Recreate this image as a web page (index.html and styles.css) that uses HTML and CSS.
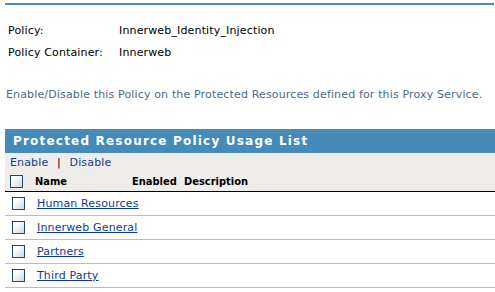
FILE: index.html
```html
<!DOCTYPE html>
<html lang="en">
<head>
  <meta charset="UTF-8">
  <title>Policy Usage</title>
  <link rel="stylesheet" href="styles.css">
</head>
<body>
  <div class="top-rule"></div>

  <table class="policy-info">
    <tr>
      <td class="label">Policy:</td>
      <td>Innerweb_Identity_Injection</td>
    </tr>
    <tr>
      <td class="label">Policy Container:</td>
      <td>Innerweb</td>
    </tr>
  </table>

  <p class="hint">Enable/Disable this Policy on the Protected Resources defined for this Proxy Service.</p>

  <div class="usage">
    <div class="usage-title">Protected Resource Policy Usage List</div>
    <div class="toolbar">
      <div class="actions">
        <a href="#">Enable</a>
        <span class="sep">|</span>
        <a href="#">Disable</a>
      </div>
      <div class="head-row">
        <span class="cb"></span>
        <span class="col-name">Name</span>
        <span class="col-enabled">Enabled</span>
        <span class="col-desc">Description</span>
      </div>
    </div>
    <ul class="rows">
      <li><span class="cb"></span><a href="#">Human Resources</a></li>
      <li><span class="cb"></span><a href="#">Innerweb General</a></li>
      <li><span class="cb"></span><a href="#">Partners</a></li>
      <li><span class="cb"></span><a href="#">Third Party</a></li>
    </ul>
  </div>
</body>
</html>
```
FILE: styles.css
```css
* {
  margin: 0;
  padding: 0;
  box-sizing: border-box;
}

body {
  font-family: "DejaVu Sans", sans-serif;
  font-size: 11px;
  letter-spacing: 0.15px;
  color: #000;
  background: #fff;
}

/* Top rule */
.top-rule {
  height: 2px;
  margin: 3px 1px 0 5px;
  background: #4a8abb;
}

/* Policy info */
.policy-info {
  border-collapse: collapse;
  margin: 14px 0 0 8px;
}

.policy-info td {
  height: 22px;
  padding: 0;
}

.policy-info .label {
  width: 111px;
}

.hint {
  margin: 25px 0 0 6px;
  color: #4c6a8a;
}

/* Usage list */
.usage {
  margin: 28px 0 0 5px;
}

.usage-title {
  height: 24px;
  line-height: 24px;
  padding-left: 8px;
  background: #458ab9;
  color: #fff;
  font-weight: bold;
  font-size: 12px;
  letter-spacing: 1.2px;
}

.toolbar {
  height: 39px;
  background: #eeedea;
  border-bottom: 1px solid #000;
  padding: 3px 0 0 5px;
}

.actions a {
  color: #163c8c;
  text-decoration: none;
}

.actions .sep {
  margin: 0 5px;
  color: #000;
}

.head-row {
  display: flex;
  align-items: center;
  height: 22px;
  margin-top: 1px;
  font-family: "DejaVu Sans Condensed", "DejaVu Sans", sans-serif;
  font-weight: bold;
  letter-spacing: 0;
}

.cb {
  display: inline-block;
  width: 13px;
  height: 13px;
  border: 1px solid #1c4878;
  background: linear-gradient(135deg, #fff 20%, #d8d8d4);
  flex: none;
}

.col-name {
  margin-left: 12px;
  width: 97px;
}

.col-enabled {
  width: 52px;
}

ul {
  list-style: none;
}

.rows li {
  display: flex;
  align-items: center;
  height: 24px;
  border-bottom: 1px solid #bbb;
  padding-left: 7px;
}

.rows li a {
  margin-left: 12px;
  color: #0c3c96;
}
```
